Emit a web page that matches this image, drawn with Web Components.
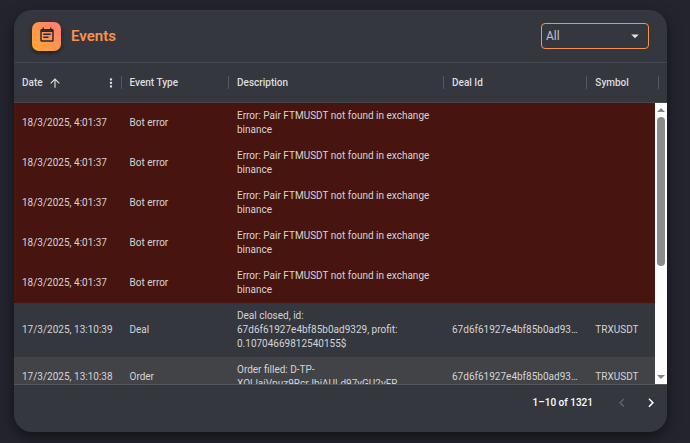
<!DOCTYPE html>
<html lang="en">
<head>
<meta charset="utf-8">
<title>Events</title>
<style>
  body {
    margin: 0;
    padding: 10px 23px 11px 14px;
    background: #24242f;
    color: #d3d4d6;
    font-family: Roboto, "Liberation Sans", sans-serif;
    font-size: 10px;
    --card: #34373e;
    --line: #44474d;
    --accent: #fb9150;
  }
</style>
</head>
<body>
<events-card>
  <span slot="title">Events</span>
  <event-filter slot="actions"></event-filter>
  <events-grid></events-grid>
  <page-nav slot="footer">1–10 of 1321</page-nav>
</events-card>

<script>
/**
 * Attaches an open shadow root with the given markup.
 *
 * @param {HTMLElement} host
 * @param {string} html
 */
const attach = (host, html) => {
  host.attachShadow({ mode: "open" }).innerHTML = html;
};

/**
 * Gradient tile with the calendar icon.
 */
class EventsIcon extends HTMLElement {
  constructor() {
    super();
    attach(this, `
      <style>
        :host {
          display: grid;
          justify-items: center;
          box-sizing: border-box;
          width: 29px;
          height: 29px;
          padding-top: 4px;
          border-radius: 7px;
          background: linear-gradient(45deg, #ffab2e, #ff9350 50%, #ff7b7b);
          box-shadow: 0 2px 4px rgba(0, 0, 0, 0.45);
        }
        svg { display: block; width: 18px; height: 18px; fill: #282b31; }
      </style>
      <svg viewBox="0 0 24 24" aria-hidden="true">
        <path d="M19 4h-1V2h-2v2H8V2H6v2H5c-1.1 0-2 .9-2 2v13c0 1.1.9 2 2 2h14c1.1 0 2-.9 2-2V6c0-1.1-.9-2-2-2zm0 15H5V8h14v11zM7 10h10v2H7zM7 14h7v2H7z"/>
      </svg>
    `);
  }
}
customElements.define("events-icon", EventsIcon);

/**
 * Card with a title bar, a body and a footer.
 */
class EventsCard extends HTMLElement {
  constructor() {
    super();
    attach(this, `
      <style>
        :host {
          display: block;
          border-radius: 18px;
          overflow: hidden;
          background: var(--card);
          box-shadow: 0 5px 14px rgba(0, 0, 0, 0.5);
        }
        header {
          display: flex;
          align-items: center;
          gap: 10px;
          height: 52px;
          padding: 0 18px;
          box-sizing: border-box;
        }
        h2 {
          flex: 1;
          margin: 0;
          color: var(--accent);
          font-size: 15px;
          font-weight: 600;
          line-height: 20px;
        }
      </style>
      <header>
        <events-icon></events-icon>
        <h2><slot name="title"></slot></h2>
        <slot name="actions"></slot>
      </header>
      <slot></slot>
      <slot name="footer"></slot>
    `);
  }
}
customElements.define("events-card", EventsCard);

/**
 * Drop-down that picks the type of event.
 */
class EventFilter extends HTMLElement {
  constructor() {
    super();
    attach(this, `
      <style>
        :host { display: grid; align-items: center; width: 108px; }
        select, svg { grid-area: 1 / 1; }
        select {
          appearance: none;
          width: 100%;
          height: 26px;
          padding: 0 4px;
          border: 1px solid var(--accent);
          border-radius: 4px;
          background: transparent;
          color: #c0c2c5;
          font: inherit;
          font-size: 12px;
        }
        option { background: #34373e; }
        svg {
          justify-self: end;
          width: 18px;
          height: 18px;
          margin-right: 5px;
          fill: #e4e4e5;
          pointer-events: none;
        }
      </style>
      <select aria-label="Event type">
        <option>All</option>
        <option>Bot error</option>
        <option>Deal</option>
        <option>Order</option>
      </select>
      <svg viewBox="0 0 24 24" aria-hidden="true"><path d="M7 10l5 5 5-5z"/></svg>
    `);
  }
}
customElements.define("event-filter", EventFilter);

/**
 * Vertical scroll rail with two arrows and a thumb.
 */
class ScrollRail extends HTMLElement {
  constructor() {
    super();
    attach(this, `
      <style>
        :host {
          display: flex;
          flex-direction: column;
          justify-content: space-between;
          align-items: center;
          box-sizing: border-box;
          padding: 5px 0;
          background: #fdfdfd;
        }
        svg { width: 8px; height: 4px; fill: #858585; }
        .track { flex: 1; width: 8px; margin: 5px 0; }
        .thumb { height: 59%; border-radius: 4px; background: #8b8b8b; }
      </style>
      <svg viewBox="0 0 8 4"><path d="M0 4l4-4 4 4z"/></svg>
      <div class="track"><div class="thumb"></div></div>
      <svg viewBox="0 0 8 4"><path d="M0 0l4 4 4-4z"/></svg>
    `);
  }
}
customElements.define("scroll-rail", ScrollRail);

const botError = {
  date: "18/3/2025, 4:01:37",
  type: "Bot error",
  text: "Error: Pair FTMUSDT not found in exchange binance",
  deal: "",
  symbol: "",
};

const events = [
  botError,
  botError,
  botError,
  botError,
  botError,
  {
    date: "17/3/2025, 13:10:39",
    type: "Deal",
    text: "Deal closed, id: 67d6f61927e4bf85b0ad9329, profit: 0.10704669812540155$",
    deal: "67d6f61927e4bf85b0ad9329",
    symbol: "TRXUSDT",
  },
  {
    date: "17/3/2025, 13:10:38",
    type: "Order",
    text: "Order filled: D-TP-XOLlajVpuz9RcrJbiAULd97yGU2vFR",
    deal: "67d6f61927e4bf85b0ad9329",
    symbol: "TRXUSDT",
  },
];

/**
 * Table of events. The header spans the full width, the rows scroll below it.
 */
class EventsGrid extends HTMLElement {
  constructor() {
    super();
    attach(this, `
      <style>
        :host {
          display: grid;
          grid-template-columns: minmax(0, 1fr) 12px;
          border-top: 1px solid var(--line);
        }
        table { display: contents; }
        thead { display: block; grid-area: 1 / 1 / 2 / 3; }
        tbody {
          display: block;
          grid-area: 2 / 1 / 3 / 3;
          max-height: 281px;
          overflow-y: auto;
          scrollbar-width: none;
        }
        scroll-rail { grid-area: 2 / 2; z-index: 1; }
        tr {
          display: grid;
          grid-template-columns: repeat(2, minmax(0, 3fr)) minmax(0, 6fr) minmax(0, 4fr) minmax(0, 2fr);
          align-items: center;
          padding-right: 8px;
        }
        thead tr { height: 40px; box-sizing: border-box; border-bottom: 1px solid var(--line); }
        th {
          display: flex;
          align-items: center;
          gap: 5px;
          height: 11px;
          padding-left: 8px;
          border-right: 1px solid #55585d;
          font-weight: 500;
          line-height: 14px;
          color: #dcdddf;
        }
        th svg { width: 14px; height: 14px; fill: currentColor; }
        th button {
          display: grid;
          margin: 0 2px 0 auto;
          padding: 0;
          border: 0;
          background: none;
          color: inherit;
        }
        td { padding: 6px 8px; line-height: 14px; overflow-wrap: break-word; }
        tbody tr:nth-child(odd) { background: #424347; }
        tbody tr:nth-child(even) { background: var(--card); }
        tbody tr.error { background: #481410; }
        td.date { white-space: nowrap; }
        td.deal { overflow: hidden; text-overflow: ellipsis; white-space: nowrap; }
      </style>
      <table>
        <thead>
          <tr>
            <th>Date
              <svg viewBox="0 0 24 24" aria-hidden="true"><path d="M4 12l1.41 1.41L11 7.83V20h2V7.83l5.58 5.59L20 12l-8-8-8 8z"/></svg>
              <button aria-label="Date column menu">
                <svg viewBox="0 0 24 24"><path d="M12 8c1.1 0 2-.9 2-2s-.9-2-2-2-2 .9-2 2 .9 2 2 2zm0 2c-1.1 0-2 .9-2 2s.9 2 2 2 2-.9 2-2-.9-2-2-2zm0 6c-1.1 0-2 .9-2 2s.9 2 2 2 2-.9 2-2-.9-2-2-2z"/></svg>
              </button>
            </th>
            <th>Event Type</th>
            <th>Description</th>
            <th>Deal Id</th>
            <th>Symbol</th>
          </tr>
        </thead>
        <tbody></tbody>
      </table>
      <scroll-rail></scroll-rail>
    `);
  }

  connectedCallback() {
    this.render();
  }

  render() {
    this.shadowRoot.querySelector("tbody").innerHTML = events
      .map((e) => `
        <tr class="${e.type === "Bot error" ? "error" : ""}">
          <td class="date">${e.date}</td>
          <td>${e.type}</td>
          <td>${e.text}</td>
          <td class="deal">${e.deal}</td>
          <td>${e.symbol}</td>
        </tr>`)
      .join("");
  }
}
customElements.define("events-grid", EventsGrid);

/**
 * Footer with the shown range and the previous and next buttons.
 */
class PageNav extends HTMLElement {
  constructor() {
    super();
    attach(this, `
      <style>
        :host {
          display: flex;
          justify-content: flex-end;
          align-items: center;
          height: 48px;
          padding: 0 7px 12px 0;
          box-sizing: border-box;
          border-top: 1px solid #55575c;
          color: #fff;
          font-weight: 500;
        }
        span { margin-right: 20px; }
        button {
          display: grid;
          padding: 0;
          margin-left: 11px;
          border: 0;
          background: none;
          color: inherit;
        }
        span + button { margin-left: 0; }
        button:disabled { color: #5d6065; }
        svg { width: 18px; height: 18px; fill: currentColor; }
      </style>
      <span><slot></slot></span>
      <button aria-label="Previous page" disabled>
        <svg viewBox="0 0 24 24"><path d="M15.41 16.09l-4.58-4.59 4.58-4.59L14 5.5l-6 6 6 6z"/></svg>
      </button>
      <button aria-label="Next page">
        <svg viewBox="0 0 24 24"><path d="M8.59 16.34l4.58-4.59-4.58-4.59L10 5.75l6 6-6 6z"/></svg>
      </button>
    `);
  }
}
customElements.define("page-nav", PageNav);
</script>
</body>
</html>
